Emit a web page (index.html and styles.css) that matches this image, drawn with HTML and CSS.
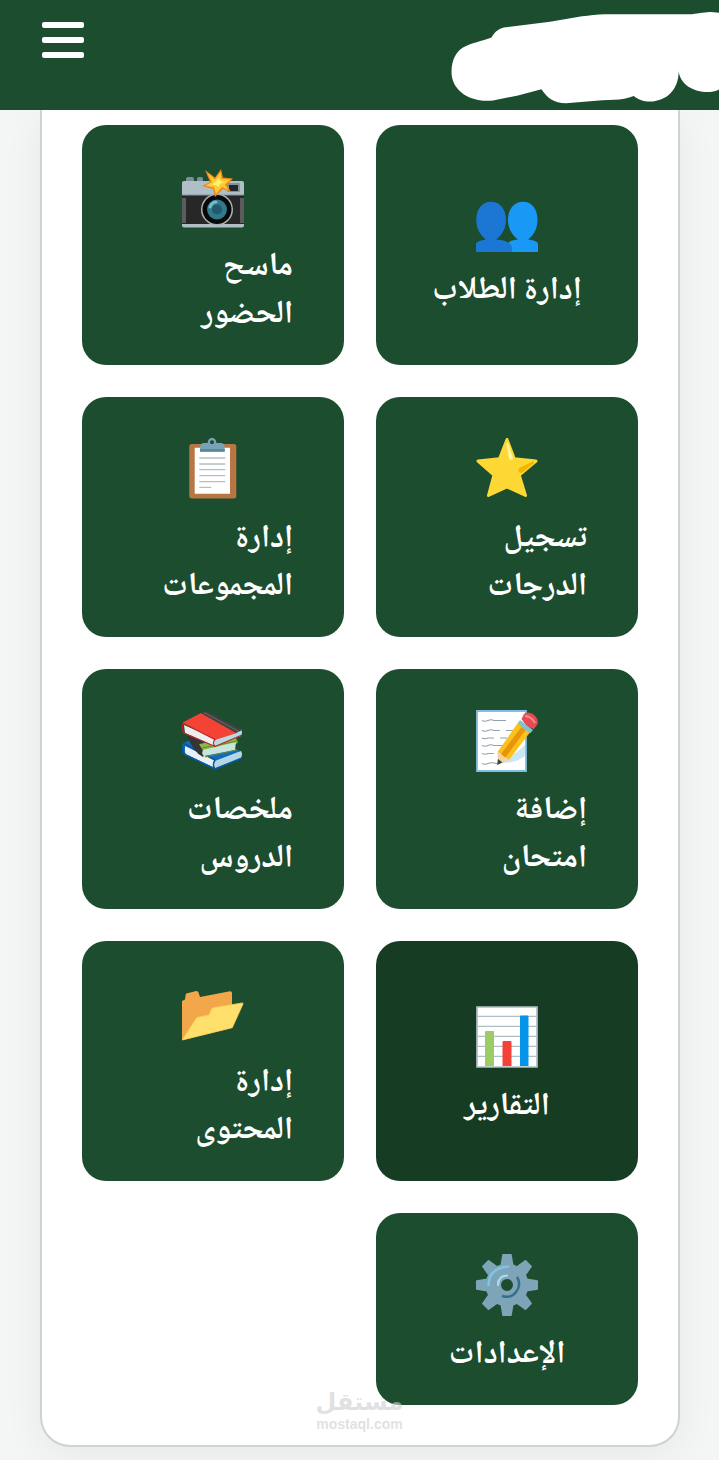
FILE: index.html
```
<!DOCTYPE html>
<html lang="ar" dir="rtl">
<head>
<meta charset="utf-8">
<meta name="viewport" content="width=device-width, initial-scale=1">
<title>إدارة الطلاب</title>
<link rel="stylesheet" href="styles.css">
</head>
<body>
<header class="topbar">
  <svg class="brand" viewBox="0 0 268 110" aria-hidden="true"><path fill="#fff" d="M0.500 72C0.500 60 5 52 12 47.500C20 43 31 41 40.500 37.500C44 31 49 28 55 27.300L99 21.700L131 16.300C138 15.700 146 14.500 154 14.300H241C248 13 256 12 260 12L268 12.700V89.500C264 91.500 259 92.300 254 92C240 91 229 83 227.600 71C228 88 217 101 199 101.500C192 101.500 187 99.500 182.700 96C177 98.500 170 99.500 163.500 99.700C147 100 131 102 115 103.300C103 103 96 98 90.500 89.300L67 95.500L42 100.500C18 103 .5 90 .5 72Z"/></svg>
  <button class="menu" type="button" aria-label="القائمة"><span class="bar"></span><span class="bar"></span><span class="bar"></span></button>
</header>
<main class="panel">
  <nav class="grid">
    <a class="tile" href="#students">
      <svg class="icon" viewBox="0 0 64 64" aria-hidden="true"><path fill="#1a98f5" d="M48 12.700C57 12.700 62.500 20 62.500 31C62.500 41 57 48 53 50.500C59 51 63 53 63 55V63H34V53C37 51 40 51 43 50.500C39 48 33 41 33 31C33 20 39 12.700 48 12.700Z"/><path fill="#1b77d3" d="M16 12.700C25 12.700 31 20 31 31C31 41 25 48 21 50.500C30 51 37 54 37 59V63H1V54C3 52 7 51 11 50.500C7 48 1.300 41 1.300 31C1.300 20 7 12.700 16 12.700Z"/></svg>
      <span class="label">إدارة الطلاب</span>
    </a>
    <a class="tile" href="#scanner">
      <svg class="icon" viewBox="0 0 64 64" aria-hidden="true"><path fill="#78909c" d="M5 17V14Q5 12 7 12H11Q13 12 13 14V17ZM16 17V14Q16 12 18 12H20Q22 12 22 14V17Z"/><rect x="1" y="16" width="62" height="46.500" rx="2" fill="#b0bec5"/><path fill="#272727" d="M1 30H63V59H1Z"/><path fill="#5c5c5c" d="M1 33H5V58H1ZM59 33H63V58H59Z"/><path stroke="#82979f" stroke-width="1" d="M1 30H63"/><rect x="46" y="18" width="13" height="9" rx="1" fill="#82939a"/><rect x="48" y="20" width="9" height="6" fill="#25282b"/><circle cx="36" cy="44.500" r="16" fill="#aab4b8"/><circle cx="36" cy="44.500" r="14.500" fill="#080808"/><circle cx="36" cy="44.500" r="10" fill="#30788b"/><circle cx="36" cy="44.500" r="5" fill="#24586b"/><path d="M29 42Q31 37 35 37" fill="none" stroke="#75bcc8" stroke-width="3" stroke-linecap="round"/><path fill="#ef861e" d="M40 4L42 12.500L52 13.500L46 20L50 27L42 24L34 32L32 24L21 21L29 17L24 5L34 12.500Z"/><path fill="#ffcb2e" d="M39.500 7L40.500 14L49.500 14.500L44 19.500L47.500 25L41 22L35 29L33 22.500L24.500 20.500L31 17L26.500 8L34 14.500Z"/><path fill="#fff176" d="M38 13L39 16L43 17L39 19L38 22L34.500 20L31 20L34 17Z"/></svg>
      <span class="label label-wide">ماسح<br>الحضور</span>
    </a>
    <a class="tile" href="#grades">
      <svg class="icon" viewBox="0 0 64 64" aria-hidden="true"><path fill="#fdd835" stroke="#fdd835" stroke-width="3" stroke-linejoin="round" d="M32 2.500L39.300 21.700L61 24L44.200 38L50.500 58.500L32 50L13.500 58.500L19 38L3 24L24.500 21.700Z"/><path fill="#fff59d" d="M31.500 7Q32 5 33.500 7L38 21Q38.500 23 36.500 23L34 22Z"/><path fill="#f4b400" d="M58 24.500Q60 25 58.500 26.500L48 35Q45 37 43.500 34.500Q42.500 32 46 30Z"/></svg>
      <span class="label label-wide">تسجيل<br>الدرجات</span>
    </a>
    <a class="tile" href="#groups">
      <svg class="icon" viewBox="0 0 64 64" aria-hidden="true"><rect x="8.300" y="7" width="47" height="54.500" rx="2.500" fill="#b87645"/><path fill="#fff" d="M13.700 10.700H49V56.700H13.700Z"/><path stroke="#b3bec5" stroke-width="1.300" d="M18.300 21H44.300M18.300 27H44.300M18.300 32.700H44.300M18.300 38.700H44.300M18.300 44.700H44.300M18.300 50.300H30.300"/><path fill="#78a3b7" fill-rule="evenodd" d="M31 .8Q35 1 35.400 6H41Q43.700 7 43.700 10V14.700H19V10Q19 7 22 6H26.600Q27 1 31 .8ZM31 3.300A2 2 0 1 0 31 7.300A2 2 0 1 0 31 3.300"/><path fill="#5b879b" d="M19 12H43.700V14.700H19Z"/></svg>
      <span class="label label-wide">إدارة<br>المجموعات</span>
    </a>
    <a class="tile" href="#exam">
      <svg class="icon" viewBox="0 0 64 64" aria-hidden="true"><path fill="#fff" stroke="#81bfe2" stroke-width="1.800" d="M2 2H51V62H2Z"/><path fill="none" stroke="#94a2aa" stroke-width="1.100" d="M7 11.500Q10 13 13 11.500T19 11.500H31M7 21.500Q10 23 13 21.500T19 21.500H25M31 21.500H39M7 29Q10 30.500 13 29H19M25 29H32M7 36.500Q10 38 13 36.500T19 36.500H29M7 44.500Q10 46 13 44.500H19M7 54.500Q10 56 13 54.500T22 54.500"/><path fill="#cce6f4" d="M27 54Q42 43 50 36V47Q41 54 27 54Z"/><path fill="#fbc11c" d="M43.500 13L56 22L34 51L22.500 43Z"/><path fill="#e9940b" d="M48 16L52 19L30 49L26 45Z"/><path fill="#f3d2a2" d="M22.500 43L34 51L23 55.500Z"/><path fill="#424242" d="M23 50L27.500 53.500L22 56Z"/><path fill="#82c2d0" d="M45 11L58 21L55.500 24Q48 21 43 14Z"/><path fill="#e34c55" d="M49 5Q52 2 58 5Q64 10 62.500 15L59 20Q51 18 46.500 10Z"/><path fill="none" stroke="#ff8a88" stroke-width="2" d="M50 7Q56 7 60 14"/></svg>
      <span class="label label-wide">إضافة<br>امتحان</span>
    </a>
    <a class="tile" href="#lessons">
      <svg class="icon" viewBox="0 0 64 64" aria-hidden="true"><path fill="#1469bd" d="M2 34L26 24L61 43L35 59L4 46Q0 42 2 34Z"/><path fill="#e9f1f5" d="M4 37L35 52L58 43L60 49L34 59L4 45Z"/><path fill="#b3d8e5" d="M34 52L60 42Q62 45 60 49L34 59Z"/><path fill="none" stroke="#0759a6" stroke-width="1.600" d="M2 34L34 51Q31 56 34 60L61 49M3 37Q0 43 5 46L34 60"/><path fill="#353535" d="M6 27L14 23L28 40L22 48Q13 44 6 27Z"/><path fill="#8fb83d" d="M18 35L55 29L57 34L24 45Z"/><path fill="#c6e5dd" d="M22 41L55 33L54 41L23 47Q20 45 22 41Z"/><path stroke="#648b2d" stroke-width="1.200" fill="none" d="M21 39L57 32M24 48L56 41"/><path fill="#eee" d="M3 16L33 29L60 20V26L34 37L4 24Z"/><path fill="#b9d9e3" d="M34 30L60 20Q62 23 60 27L34 37Z"/><path fill="#f44336" d="M1.500 13.500L20 4L56 24L34 31Z"/><path fill="#424242" d="M20 4L25 2L61.500 21L55 24Z"/><path stroke="#757575" stroke-width=".8" d="M23 3.500L58 22.500"/><path fill="none" stroke="#b82b2c" stroke-width="1.200" d="M1.500 14L34 30.500Q31 34 34 37.500L61 26M2 15Q0 22 4 24.500L34 37.500"/></svg>
      <span class="label label-wide">ملخصات<br>الدروس</span>
    </a>
    <a class="tile tile-active" href="#reports">
      <svg class="icon" viewBox="0 0 64 64" aria-hidden="true"><path fill="#fff" stroke="#b0bec5" stroke-width="1.700" d="M2 2H62V62H2Z"/><path stroke="#b0bec5" stroke-width="1.200" d="M2 11.300H62M2 21.300H62M2 31.300H62M2 41.300H62M2 51.300H62"/><path fill="#9ccc65" d="M10 61V27Q10 26 11 26H18Q19 26 19 27V61Z"/><path fill="#f44336" d="M27.500 61V37Q27.500 36 28.500 36H35.500Q36.500 36 36.500 37V61Z"/><path fill="#0393e9" d="M45 61V11.500Q45 10.500 46 10.500H52.500Q53.500 10.500 53.500 11.500V61Z"/></svg>
      <span class="label">التقارير</span>
    </a>
    <a class="tile" href="#content">
      <svg class="icon" viewBox="0 0 64 64" aria-hidden="true"><path fill="#f2a84a" d="M1 20L4 18.500L4.700 13.500Q5 12.500 6 12.200L15.500 10Q17 10 17.500 11.500L19 16L49 10.200Q51 10 51 12V46.700L2 59Q1 59 1 58Z"/><path fill="#ffe06c" stroke="#f9cd57" stroke-width=".8" stroke-linejoin="round" d="M1.300 59L15 37.500Q15.500 36.500 17 36.300L28 34L30.500 28Q31 27 32.500 26.700L61 22Q62.500 22 62 23L51.300 46.700Z"/></svg>
      <span class="label label-wide">إدارة<br>المحتوى</span>
    </a>
    <a class="tile" href="#settings">
      <svg class="icon" viewBox="0 0 64 64" aria-hidden="true"><defs><path id="tooth" d="M25.500 12L27.300 1.500Q27.500 1 28 1H36Q36.500 1 36.700 1.500L38.500 12Z"/></defs><g fill="#7da4b7"><use href="#tooth"/><use href="#tooth" transform="rotate(45 32 32)"/><use href="#tooth" transform="rotate(90 32 32)"/><use href="#tooth" transform="rotate(135 32 32)"/><use href="#tooth" transform="rotate(180 32 32)"/><use href="#tooth" transform="rotate(225 32 32)"/><use href="#tooth" transform="rotate(270 32 32)"/><use href="#tooth" transform="rotate(315 32 32)"/><path fill-rule="evenodd" d="M32 10.500A21.500 21.500 0 1 1 32 53.500A21.500 21.500 0 1 1 32 10.500ZM32 26A6 6 0 1 0 32 38A6 6 0 1 0 32 26Z"/></g><path fill="none" stroke="#82c4df" stroke-width="2.500" stroke-linecap="round" d="M13.500 32Q14 15 33 13.500"/><path fill="none" stroke="#a7dff0" stroke-width="2.200" stroke-linecap="round" d="M23 32Q23 23 32 22.500"/><path fill="none" stroke="#34708c" stroke-width="2.500" d="M42 24C48 34 39 47 27 43"/></svg>
      <span class="label">الإعدادات</span>
    </a>
  </nav>
</main>
<div class="watermark"><span class="mark-ar">مستقل</span><span class="mark-en" dir="ltr">mostaql.com</span></div>
</body>
</html>
```
FILE: styles.css
```
* { box-sizing: border-box; }

body {
  margin: 0;
  padding-bottom: 13px;
  position: relative;
  background: #f4f6f5;
  color: #fff;
  font-family: "Noto Naskh Arabic UI", "Noto Naskh Arabic", "Noto Sans Arabic", "DejaVu Sans", sans-serif;
}

.topbar {
  position: relative;
  z-index: 1;
  display: flex;
  justify-content: space-between;
  align-items: flex-start;
  height: 110px;
  background: #1b4d2e;
}

.brand { width: 268px; height: 110px; }

.menu {
  display: flex;
  flex-direction: column;
  gap: 9px;
  margin: 22px 0 0 42px;
  padding: 0;
  border: 0;
  background: none;
}

.bar { width: 42px; height: 6px; border-radius: 2px; background: #fff; }

.panel {
  margin: 0 39px 0 40px;
  padding: 15px 40px 40px;
  border: 2px solid #cfd2d1;
  border-top: 0;
  border-radius: 0 0 30px 30px;
  background: #fff;
  box-shadow: 0 8px 40px rgba(0, 0, 0, 0.06);
}

.grid {
  display: grid;
  grid-template-columns: 1fr 1fr;
  gap: 32px;
}

.tile {
  display: flex;
  flex-direction: column;
  align-items: center;
  justify-content: center;
  padding: 32px 16px 26px;
  border-radius: 24px;
  background: #1b4d2e;
  color: #fff;
  text-decoration: none;
}

.tile-active { background: #163c24; }

.icon { width: 64px; height: 64px; margin: 8px 0 14px; }

.label {
  font-size: 32px;
  font-weight: 700;
  line-height: 48px;
  white-space: nowrap;
}

.label-wide { width: 160px; text-align: right; }

.watermark {
  position: absolute;
  bottom: 28px;
  left: 0;
  right: 0;
  display: flex;
  flex-direction: column;
  align-items: center;
  color: rgba(205, 205, 205, 0.6);
  font-weight: 700;
  pointer-events: none;
}

.mark-ar { font-family: "DejaVu Sans", sans-serif; font-size: 24px; line-height: 28px; }
.mark-en { font-family: "Liberation Sans", Arial, sans-serif; font-size: 14px; line-height: 16px; }
```
